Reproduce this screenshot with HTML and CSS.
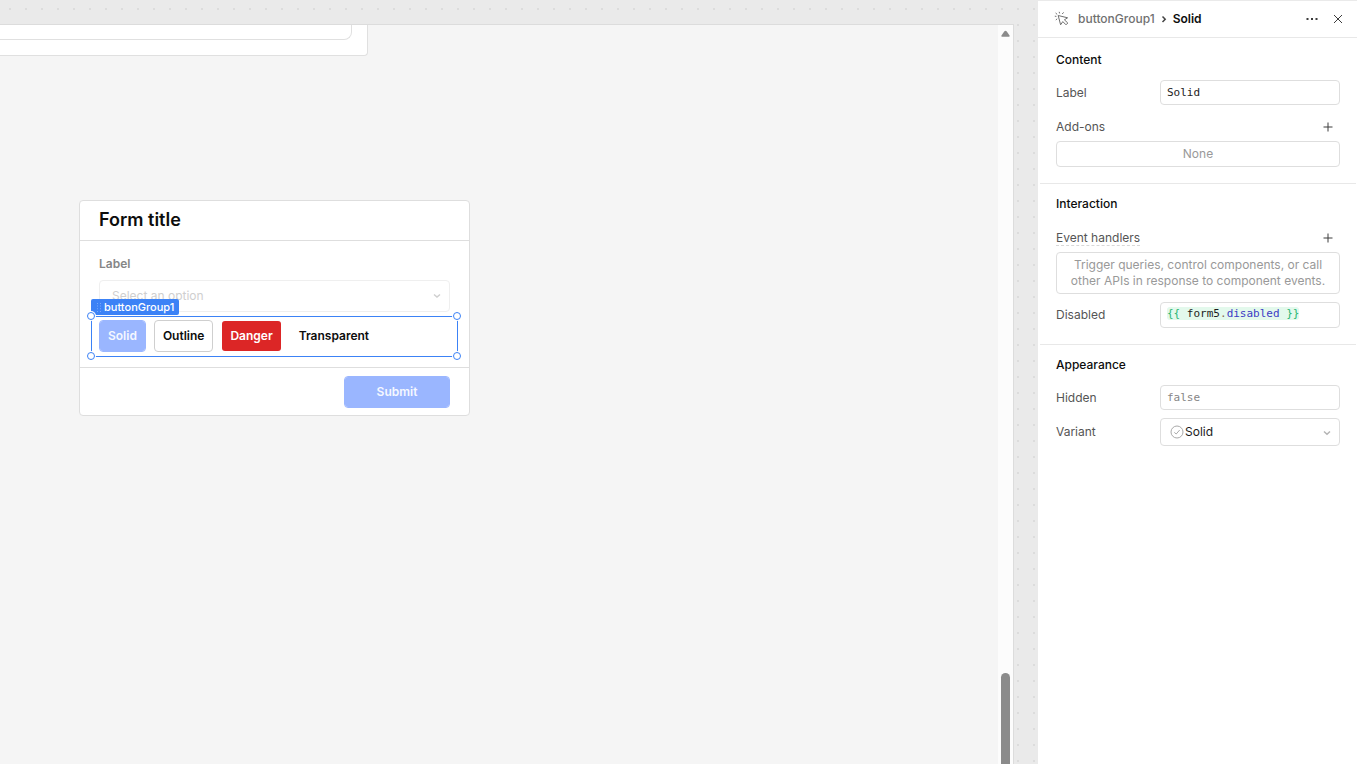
FILE: index.html
```html
<!DOCTYPE html>
<html lang="en">
<head>
    <meta charset="UTF-8">
    <meta name="viewport" content="width=device-width, initial-scale=1.0">
    <title>App Editor</title>
    <link rel="stylesheet" href="styles.css">
</head>
<body>
    <!-- Canvas -->
    <main class="stage">
        <div class="canvas">
            <div class="prev-card">
                <div class="prev-inner"></div>
            </div>

            <form class="form-card">
                <header class="form-header">
                    <h1>Form title</h1>
                </header>
                <div class="form-body">
                    <label class="form-label" for="option">Label</label>
                    <div class="form-select">
                        <select id="option" disabled>
                            <option>Select an option</option>
                        </select>
                        <svg class="chevron" width="10" height="10" viewBox="0 0 10 10"><path d="M2 3.5 L5 6 L8 3.5"/></svg>
                    </div>
                    <div class="button-group">
                        <span class="tag">
                            <svg width="6" height="9" viewBox="0 0 6 9"><path d="M1 0h1v1h-1zM4 0h1v1h-1zM1 2.6h1v1h-1zM4 2.6h1v1h-1zM1 5.2h1v1h-1zM4 5.2h1v1h-1zM1 8h1v1h-1zM4 8h1v1h-1z"/></svg>
                            buttonGroup1
                        </span>
                        <button type="button" class="btn btn-solid" disabled>Solid</button>
                        <button type="button" class="btn btn-outline">Outline</button>
                        <button type="button" class="btn btn-danger">Danger</button>
                        <button type="button" class="btn btn-transparent">Transparent</button>
                        <i class="handle top left"></i>
                        <i class="handle top right"></i>
                        <i class="handle bottom left"></i>
                        <i class="handle bottom right"></i>
                    </div>
                </div>
                <footer class="form-footer">
                    <button type="submit" class="btn btn-solid btn-submit" disabled>Submit</button>
                </footer>
            </form>
        </div>
        <div class="scrollbar">
            <svg width="9" height="8" viewBox="0 0 10 8"><path d="M1 7 Q0 7 .5 5.8 L3.8 1 Q5 0 6.2 1 L9.5 5.8 Q10 7 9 7 Z"/></svg>
            <div class="thumb"></div>
        </div>
    </main>

    <!-- Inspector -->
    <aside class="panel">
        <header class="panel-header">
            <svg class="cursor-icon" width="16" height="16" viewBox="0 0 16 16"><path d="M4.2 4.5 L13.6 6.8 L10.4 8.8 L13.8 12 L12 13.8 L8.8 10.6 L6.6 13.8 Z"/><path d="M5.6 2.4 L5.2 .8M8.2 3 L9.6 1.4M3.2 3.4 L1.6 2M2.4 5.4 L.8 5.2M3.2 7.8 L1.8 9"/></svg>
            <a href="#" class="crumb">buttonGroup1</a>
            <svg class="crumb-arrow" width="6" height="8" viewBox="0 0 6 8"><path d="M1.5 1.5 L4.2 4.2 L1.5 7"/></svg>
            <span class="crumb-current">Solid</span>
            <button class="icon-btn more" aria-label="More">
                <svg width="12" height="12" viewBox="0 0 12 12"><path d="M.5 5h2v2h-2zM5 5h2v2h-2zM9.5 5h2v2h-2z"/></svg>
            </button>
            <button class="icon-btn" aria-label="Close">
                <svg width="12" height="12" viewBox="0 0 12 12"><path d="M2 2 L10 10M10 2 L2 10"/></svg>
            </button>
        </header>

        <section class="section">
            <h2>Content</h2>
            <div class="row">
                <label for="label">Label</label>
                <input type="text" id="label" class="field" value="Solid">
            </div>
            <div class="row row-add">
                <span>Add-ons</span>
                <button class="icon-btn" aria-label="Add add-on">
                    <svg width="12" height="12" viewBox="0 0 12 12"><path d="M6 1.5v9M1.5 6h9"/></svg>
                </button>
            </div>
            <div class="empty">None</div>
        </section>

        <section class="section">
            <h2>Interaction</h2>
            <div class="row row-add">
                <span class="hint">Event handlers</span>
                <button class="icon-btn" aria-label="Add event handler">
                    <svg width="12" height="12" viewBox="0 0 12 12"><path d="M6 1.5v9M1.5 6h9"/></svg>
                </button>
            </div>
            <div class="empty">Trigger queries, control components, or call other APIs in response to component events.</div>
            <div class="row">
                <span id="disabled-label">Disabled</span>
                <div class="field code" role="textbox" aria-labelledby="disabled-label" contenteditable="true" spellcheck="false"><code><span class="brace">{{</span> form5<span class="dot">.</span><span class="prop">disabled</span> <span class="brace">}}</span></code></div>
            </div>
        </section>

        <section class="section">
            <h2>Appearance</h2>
            <div class="row">
                <label for="hidden">Hidden</label>
                <input type="text" id="hidden" class="field" placeholder="false">
            </div>
            <div class="row">
                <label for="variant">Variant</label>
                <div class="variant">
                    <svg class="check" width="14" height="14" viewBox="0 0 14 14"><circle cx="7" cy="7" r="6"/><path d="M4.3 7.4 L6.2 9 L9.7 5"/></svg>
                    <select id="variant">
                        <option>Solid</option>
                        <option>Outline</option>
                    </select>
                    <svg class="chevron" width="10" height="10" viewBox="0 0 10 10"><path d="M2 3.5 L5 6.2 L8 3.5"/></svg>
                </div>
            </div>
        </section>
    </aside>
</body>
</html>
```

FILE: styles.css
```css
* {
    box-sizing: border-box;
}
body {
    margin: 0;
    height: 100vh;
    display: flex;
    overflow: hidden;
    font-family: Inter, "Liberation Sans", sans-serif;
    font-optical-sizing: none;
    font-size: 12px;
    line-height: 16px;
    color: #0d0d0d;
    background-color: #eaeaea;
    background-image: conic-gradient(from 90deg at 14px 14px, #dcdcdc 90deg, transparent 0);
    background-size: 16px 16px;
    background-position: -5px -6px;
}
button, input, select {
    font: inherit;
    color: inherit;
    margin: 0;
}
svg {
    flex: none;
    fill: none;
    stroke: currentColor;
}

/* Canvas */
.stage {
    flex: 1;
    display: flex;
    margin: 24px 24px 0 0;
    border-top: 1px solid #dcdcdc;
    border-right: 1px solid #dcdcdc;
    background-color: #f5f5f5;
}
.canvas {
    flex: 1;
}
.prev-card {
    width: 368px;
    padding: 0 15px 15px 0;
    background-color: #fff;
    border: 1px solid #e0e0e0;
    border-width: 0 1px 1px 0;
    border-radius: 0 0 4px 0;
}
.prev-inner {
    height: 15px;
    border: 1px solid #e0e0e0;
    border-width: 0 1px 1px 0;
    border-radius: 0 0 8px 0;
}
.scrollbar {
    width: 15px;
    display: flex;
    flex-direction: column;
    align-items: center;
    justify-content: space-between;
    padding-top: 5px;
    background-color: #fcfcfc;
    color: #8b8b8b;
}
.scrollbar svg {
    fill: currentColor;
    stroke: none;
}
.thumb {
    width: 9px;
    height: 91px;
    background-color: #8b8b8b;
    border-radius: 5px 5px 0 0;
}

/* Form */
.form-card {
    width: 391px;
    margin: 144px 0 0 79px;
    background-color: #fff;
    border: 1px solid #dedede;
    border-radius: 4px;
}
.form-header {
    height: 40px;
    padding: 7px 19px;
    border-bottom: 1px solid #dedede;
}
h1 {
    margin: 0;
    font-size: 18px;
    line-height: 24px;
    font-weight: 600;
}
.form-body {
    padding: 15px 11px 10px;
}
.form-label {
    display: block;
    margin: 0 8px 8px;
    font-weight: 600;
    color: #868686;
}
.form-select {
    position: relative;
    margin: 0 8px 4px;
}
.form-select select {
    display: block;
    width: 100%;
    height: 32px;
    padding: 0 12px;
    appearance: none;
    border: 1px solid #efefef;
    border-radius: 4px;
    background-color: #fff;
    color: #cfcfcf;
    opacity: 1;
}
.chevron {
    position: absolute;
    top: 50%;
    right: 8px;
    margin-top: -4px;
    color: #b4b4b4;
    stroke-width: 1.5;
}
.form-select .chevron {
    margin-top: -5px;
    color: #cfcfcf;
}
.button-group {
    position: relative;
    display: flex;
    gap: 8px;
    height: 41px;
    padding: 3px 7px;
    border: 1px solid #3c82f6;
}
.tag {
    position: absolute;
    left: -1px;
    bottom: 41px;
    display: flex;
    align-items: center;
    gap: 2px;
    padding: 0 5px;
    border-radius: 2px;
    background-color: #3c82f6;
    color: #fff;
    font-size: 11px;
    font-weight: 500;
}
.tag svg {
    fill: #78a9f9;
    stroke: none;
}
.handle {
    position: absolute;
    width: 8px;
    height: 8px;
    background-color: #fff;
    border: 1px solid #3c82f6;
    border-radius: 50%;
    box-shadow: 0 0 0 1px #fff;
}
.top { top: -5px; }
.bottom { bottom: -4px; }
.left { left: -5px; }
.right { right: -4px; }
.btn {
    height: 32px;
    padding: 0 8px;
    border: 1px solid transparent;
    border-radius: 4px;
    background-color: transparent;
    background-clip: padding-box;
    font-weight: 600;
}
.btn-solid {
    background-color: #9ab6ff;
    border-color: #9ab6ff;
    color: #f5f8ff;
}
.btn-outline {
    border-color: #cfcfcf;
}
.btn-danger {
    background-color: #dc2626;
    color: #fff;
}
.form-footer {
    display: flex;
    justify-content: flex-end;
    padding: 8px 19px 7px;
    border-top: 1px solid #dedede;
}
.btn-submit {
    width: 106px;
}

/* Inspector */
.panel {
    width: 319px;
    margin-top: 1px;
    background-color: #fff;
}
.panel-header {
    display: flex;
    align-items: center;
    height: 37px;
    padding: 0 12px 0 16px;
    border-bottom: 1px solid #e8e8e8;
    font-weight: 500;
}
.cursor-icon {
    margin-right: 8px;
    color: #707070;
}
.crumb {
    color: #707070;
    text-decoration: none;
}
.crumb-arrow {
    margin: 0 6px;
    stroke-width: 1.5;
    color: #444;
}
.crumb-current {
    font-weight: 600;
}
.icon-btn {
    display: flex;
    padding: 1px;
    border: none;
    background: none;
    color: #3c3c3c;
}
.more {
    margin-left: auto;
    margin-right: 12px;
}
.more svg {
    fill: currentColor;
    stroke: none;
}
.section {
    margin: 0 1px 0 2px;
    padding: 14px 16px 16px;
    border-bottom: 1px solid #e8e8e8;
}
.section + .section {
    padding-top: 12px;
}
.section:last-child {
    border-bottom: none;
}
h2 {
    margin: 0 0 12px;
    font-size: 12px;
    line-height: 16px;
    font-weight: 500;
}
.row {
    display: flex;
    align-items: center;
    justify-content: space-between;
    margin-top: 8px;
    color: #555;
}
.row-add {
    height: 20px;
    margin: 12px 5px 4px 0;
}
h2 + .row-add {
    margin-top: 16px;
}
.hint {
    line-height: 15px;
    border-bottom: 1px dashed #d8d8d8;
}
.field {
    width: 180px;
    height: 25px;
    padding: 0 6px;
    border: 1px solid #dedede;
    border-radius: 4px;
    background-color: #fff;
    font-family: "DejaVu Sans Mono", monospace;
    font-size: 11px;
    color: #1c1c1c;
}
.field::placeholder {
    color: #868686;
}
.code {
    height: 26px;
    padding-top: 3px;
}
code {
    font: inherit;
    line-height: 14px;
    background-color: #e3f9ec;
    border-radius: 3px;
}
.brace { color: #2bb673; }
.dot { color: #8a6d5a; }
.prop { color: #3b3bc4; }
.empty {
    padding: 4px 8px;
    border: 1px solid #dedede;
    border-radius: 4px;
    text-align: center;
    color: #999;
}
.variant {
    position: relative;
    width: 180px;
}
.variant select {
    display: block;
    width: 100%;
    height: 28px;
    padding: 0 24px;
    appearance: none;
    border: 1px solid #dedede;
    border-radius: 4px;
    background-color: #fff;
    color: #1c1c1c;
}
.check {
    position: absolute;
    left: 10px;
    top: 7px;
    color: #aaa;
}
```
